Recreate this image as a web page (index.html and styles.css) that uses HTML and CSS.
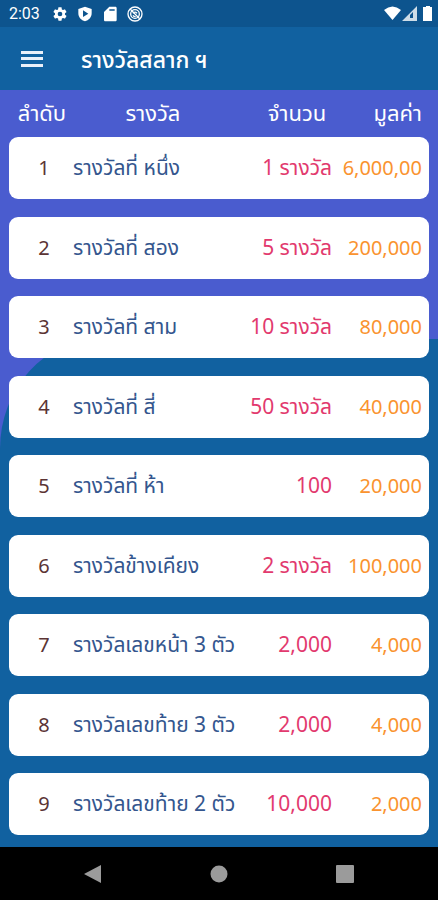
FILE: index.html
```html
<!DOCTYPE html>
<html lang="th">
<head>
<meta charset="utf-8">
<meta name="viewport" content="width=device-width, initial-scale=1">
<title>รางวัลสลาก ฯ</title>
<link rel="stylesheet" href="styles.css">
</head>
<body>
<div class="status">
  <span class="clock">2:03</span>
  <svg class="icon" viewBox="0 0 24 24" aria-hidden="true"><path fill-rule="evenodd" d="M19.4 13c0-.3.1-.6.1-1s0-.7-.1-1l2.100-1.600c.2-.2.3-.5.1-.7l-2-3.400c-.1-.2-.4-.3-.6-.2l-2.500 1c-.5-.4-1.100-.7-1.700-1l-.4-2.600c0-.3-.2-.5-.4-.5h-4c-.2 0-.5.2-.5.5l-.4 2.600c-.6.3-1.100.6-1.600 1l-2.500-1c-.3-.1-.5 0-.7.2l-2 3.400c-.1.2 0 .5.2.7L4.600 11c0 .3-.1.6-.1 1s0 .7.1 1l-2.100 1.600c-.2.2-.3.5-.2.7l2 3.400c.2.2.4.3.7.2l2.500-1c.5.4 1 .7 1.600 1l.4 2.600c0 .3.3.5.5.5h4c.2 0 .4-.2.4-.5l.4-2.600c.6-.3 1.200-.6 1.700-1l2.500 1c.2.1.5 0 .6-.2l2-3.400c.2-.2.100-.5-.1-.7zM12 15.500a3.500 3.500 0 1 1 0-7 3.500 3.500 0 0 1 0 7z"/></svg>
  <svg class="icon" viewBox="0 0 24 24" aria-hidden="true"><path fill-rule="evenodd" d="M12 1 2 4.500V11c0 6 4.300 10.500 10 12 5.700-1.500 10-6 10-12V4.500zM9 6.500l8 5-8 5z"/></svg>
  <svg class="icon" viewBox="0 0 24 24" aria-hidden="true"><path fill-rule="evenodd" d="M20 1h-9L3 9v12c0 1.100.9 2 2 2h15c1.100 0 2-.9 2-2V3c0-1.100-.9-2-2-2zM11 5h8v2h-8z"/></svg>
  <svg class="icon" viewBox="0 0 24 24" aria-hidden="true"><g fill="none" stroke="#fff" stroke-width="2"><circle cx="12" cy="12" r="10.500"/><circle cx="12" cy="12" r="6.500"/><path d="m5 5 14 14M9 11c2-3 5-2 6 0M9 14c1 2 3 2 4 2"/></g></svg>
  <svg class="signals" viewBox="0 0 50 18" aria-hidden="true">
    <path d="M0 5Q8.500-2 17 5L8.500 15z"/>
    <path opacity=".8" fill-rule="evenodd" d="M18 16 33 1v15zM26 13h3V7l-3 3z"/>
    <path d="M42 1h4v1h2v14h-9V2h3z"/>
  </svg>
</div>
<header class="bar">
  <button class="menu" type="button" aria-label="เมนู"><svg viewBox="0 0 22 16"><path d="M0 0h22v3H0zM0 6h22v3H0zM0 13h22v3H0z"/></svg></button>
  <h1>รางวัลสลาก ฯ</h1>
</header>
<main class="content">
  <table class="prizes">
    <thead><tr><th>ลำดับ</th><th>รางวัล</th><th>จำนวน</th><th>มูลค่า</th></tr></thead>
    <tbody>
      <tr><td>1</td><td>รางวัลที่ หนึ่ง</td><td>1 รางวัล</td><td>6,000,00</td></tr>
      <tr><td>2</td><td>รางวัลที่ สอง</td><td>5 รางวัล</td><td>200,000</td></tr>
      <tr><td>3</td><td>รางวัลที่ สาม</td><td>10 รางวัล</td><td>80,000</td></tr>
      <tr><td>4</td><td>รางวัลที่ สี่</td><td>50 รางวัล</td><td>40,000</td></tr>
      <tr><td>5</td><td>รางวัลที่ ห้า</td><td>100</td><td>20,000</td></tr>
      <tr><td>6</td><td>รางวัลข้างเคียง</td><td>2 รางวัล</td><td>100,000</td></tr>
      <tr><td>7</td><td>รางวัลเลขหน้า 3 ตัว</td><td>2,000</td><td>4,000</td></tr>
      <tr><td>8</td><td>รางวัลเลขท้าย 3 ตัว</td><td>2,000</td><td>4,000</td></tr>
      <tr><td>9</td><td>รางวัลเลขท้าย 2 ตัว</td><td>10,000</td><td>2,000</td></tr>
    </tbody>
  </table>
</main>
<nav class="system">
  <button type="button" aria-label="ย้อนกลับ"><svg viewBox="0 0 18 18"><path d="M17 0v18L0 9z"/></svg></button>
  <button type="button" aria-label="หน้าหลัก"><svg viewBox="0 0 18 18"><circle cx="9" cy="9" r="8.500"/></svg></button>
  <button type="button" aria-label="แอปล่าสุด"><svg viewBox="0 0 18 18"><rect width="18" height="18" rx="1"/></svg></button>
</nav>
</body>
</html>
```
FILE: styles.css
```css
* { box-sizing: border-box; }

body {
  margin: 0;
  min-height: 100vh;
  display: flex;
  flex-direction: column;
  background: #1161a0;
  color: #fff;
  font-family: "Noto Sans", "Noto Sans Thai", sans-serif;
}

.status {
  display: flex;
  align-items: center;
  gap: 9px;
  height: 27px;
  padding: 0 4px 0 9px;
  background: #0d548e;
}

.clock {
  margin-right: 3px;
  font: 400 16px/27px Roboto, sans-serif;
}

.icon { width: 16px; height: 16px; fill: #fff; }

.signals {
  width: 50px;
  height: 18px;
  margin-left: auto;
  fill: #fff;
}

.bar {
  display: flex;
  align-items: center;
  gap: 38px;
  height: 63px;
  padding: 0 21px;
}

button {
  display: flex;
  padding: 0;
  border: 0;
  background: none;
}

.menu svg { width: 22px; height: 16px; fill: #e9f0fa; }

h1 {
  margin: 0;
  font-size: 23px;
  line-height: 32px;
  font-weight: 500;
}

.content {
  position: relative;
  flex: 1;
  display: flex;
  padding: 0 9px 12px;
  background: #4a5ccf;
}

.content::before {
  content: "";
  position: absolute;
  inset: 249px 0 0;
  border-top-left-radius: 100px 110px;
  background: #1161a0;
}

.prizes {
  position: relative;
  flex: 1;
  display: flex;
  flex-direction: column;
  font-size: 21px;
  line-height: 32px;
}

tr {
  display: grid;
  grid-template-columns: 64px 1fr 96px 90px;
  align-items: center;
}

thead tr {
  height: 47px;
}

th, td { padding: 0 0 2px; white-space: nowrap; }

th { padding-bottom: 4px; font-size: 22px; font-weight: 400; }

th:nth-child(1) { padding-left: 2px; }
th:nth-child(2) { padding-right: 10px; }
th:nth-child(3) { padding-left: 12px; }
th:nth-child(4) { padding-right: 7px; text-align: right; }

tbody {
  flex: 1;
  display: flex;
  flex-direction: column;
  justify-content: space-between;
}

tbody tr {
  height: 62px;
  border-radius: 9px;
  background: #fff;
}

td:nth-child(1) { padding: 0 0 0 6px; font-size: 20px; text-align: center; color: #5b3434; }
td:nth-child(2) { color: #34568e; }
td:nth-child(3) { padding-right: 7px; text-align: right; color: #e23a6e; }
td:nth-child(4) { padding: 0 7px 0 0; font-size: 20px; text-align: right; color: #fa932f; }

.system {
  display: grid;
  grid-template-columns: repeat(3, 126px);
  justify-content: center;
  justify-items: center;
  align-items: center;
  height: 53px;
  background: #000;
}

.system svg { width: 18px; height: 18px; fill: #9b9b9b; }
```
